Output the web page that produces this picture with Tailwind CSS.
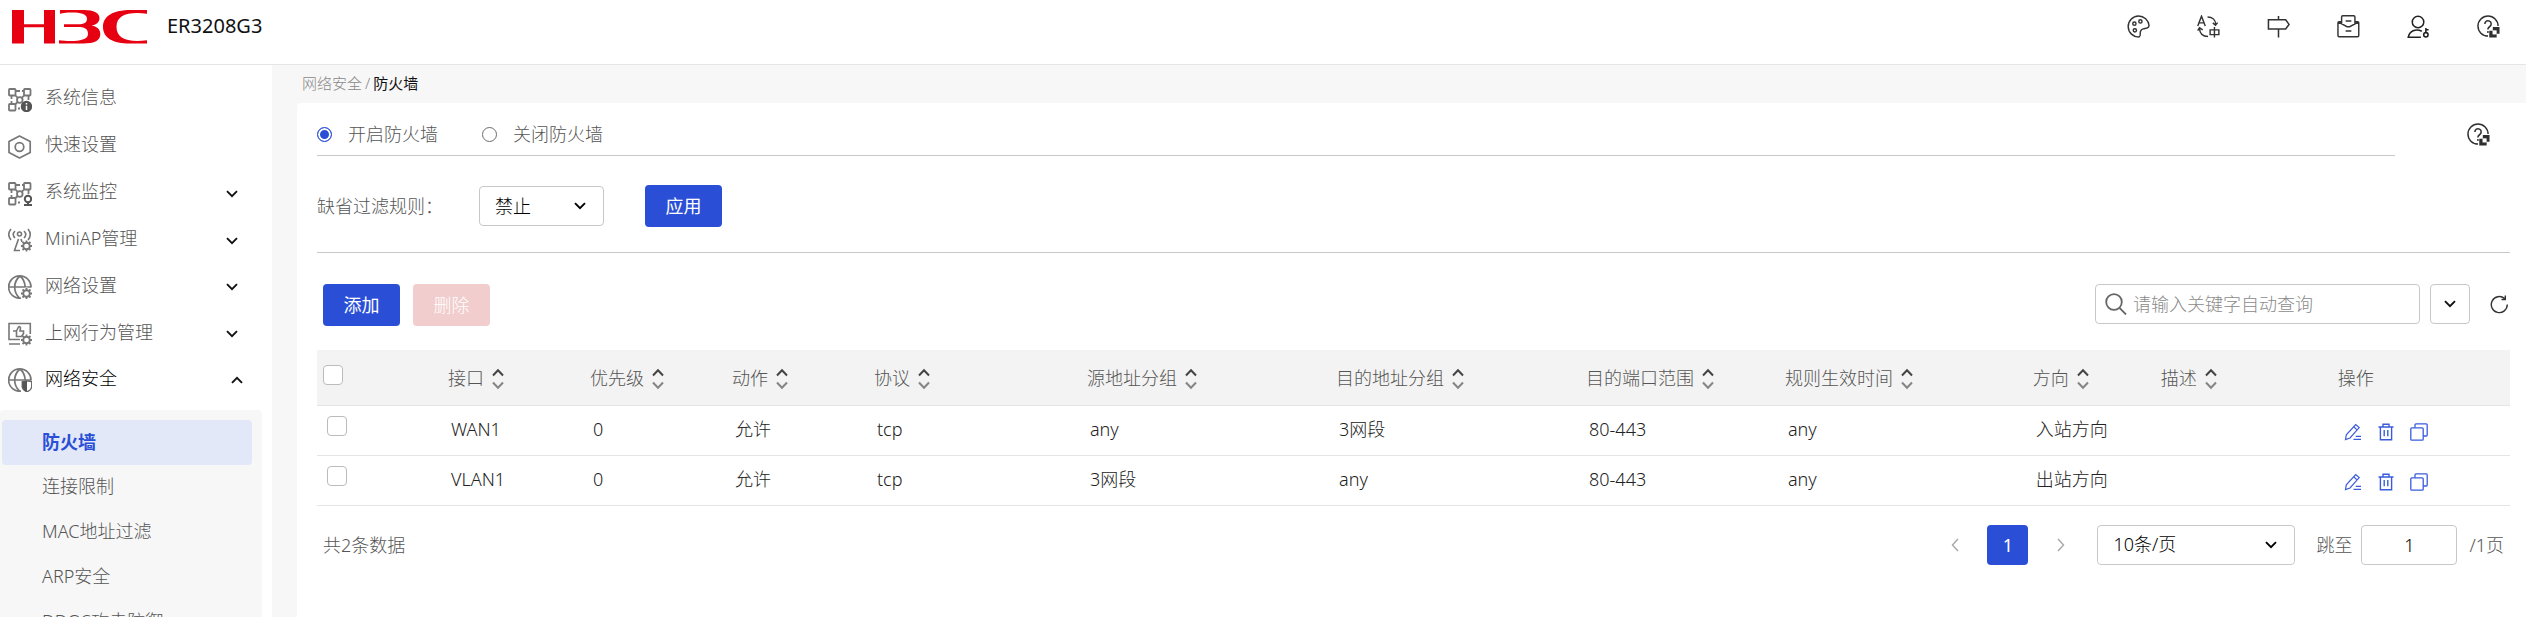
<!DOCTYPE html>
<html lang="zh-CN">
<head>
<meta charset="utf-8">
<title>ER3208G3 - 防火墙</title>
<script src="https://cdn.jsdelivr.net/npm/@tailwindcss/browser@4"></script>
</head>
<body class="flex h-screen flex-col overflow-hidden bg-white font-['Noto_Sans','Noto_Sans_CJK_SC',sans-serif] text-[18px] leading-6 font-light text-[#555]">

<svg class="hidden" aria-hidden="true">
  <defs>
    <symbol id="down" viewBox="0 0 12 8"><path d="M1 1.2 6 6.2 11 1.2" fill="none" stroke="currentColor" stroke-width="1.9"/></symbol>
    <symbol id="up" viewBox="0 0 12 8"><path d="M1 6.8 6 1.8 11 6.8" fill="none" stroke="currentColor" stroke-width="1.9"/></symbol>
    <symbol id="sort" viewBox="0 0 12 22"><path d="M1 7.5 6 2.2 11 7.5" fill="none" stroke="#444" stroke-width="2"/><path d="M1 14.5 6 19.8 11 14.5" fill="none" stroke="#858585" stroke-width="2"/></symbol>
    <symbol id="gear" viewBox="0 0 12 12"><g fill="none" stroke="currentColor"><circle cx="6" cy="6" r="3.3" stroke-width="1.9"/><path d="M6 .4v2M6 9.6v2M.4 6h2M9.6 6h2M2 2l1.5 1.5M8.5 8.5 10 10M10 2 8.500 3.500M3.500 8.500 2 10" stroke-width="1.8"/></g></symbol>
    <symbol id="grid" viewBox="0 0 24 24"><g fill="none" stroke="currentColor" stroke-width="1.800"><rect x="1" y="1" width="6.500" height="6.500" rx=".8"/><rect x="16" y="1" width="6.500" height="6.500" rx=".8"/><rect x="1" y="16" width="6.500" height="6.500" rx=".8"/><circle cx="11.800" cy="12" r="2.800"/><path d="M7.500 3H12M14 3h2M3.500 7.500V11M3.500 13v3M20.500 7.500V12M9.700 9.900 7.500 7.500M13.800 9.900 16 7.500M9.700 14 7.500 16M10 20.500h2"/></g></symbol>
    <symbol id="globe" viewBox="0 0 24 24"><g fill="none" stroke="currentColor" stroke-width="1.700"><path d="M23 12.500A11.200 11.200 0 1 0 13 23.200M1 12H23M12 1C5 7 5 17 11.500 23M12 1c3.500 3 5 6.500 5.200 11"/></g></symbol>
    <symbol id="help" viewBox="0 0 24 24"><g fill="none" stroke="#2f2f2f" stroke-width="1.500"><path d="M22 11.500A10.500 10.500 0 1 0 11.500 22"/><path d="M8.200 9.300a3.300 3.300 0 1 1 5.100 2.700c-1.300.9-2 1.400-2 3.200" stroke-width="1.600"/></g><circle cx="11.400" cy="17.700" r="1" fill="#2f2f2f"/><path d="M16.500 12.500H23.500V19.500H20.500V23.500H12.800V16.500H16.500Z" fill="#2f2f2f"/><rect x="16.200" y="16" width="4.300" height="4.300" fill="#fff"/></symbol>
    <symbol id="edit" viewBox="0 0 18 18"><g fill="none" stroke="#3a5cdc" stroke-width="1.200"><path d="M1.500 16.500 2.300 11.800 11.700 1.500 15.200 4.600 6 15Z"/><path d="M9.700 3.800 13 6.900M11.700 13.300H17M9.500 16.300H17"/></g></symbol>
    <symbol id="trash" viewBox="0 0 18 18"><g fill="none" stroke="#3a5cdc" stroke-width="1.400"><path d="M1.500 4H16.500M6 4V1.300H12V4M3.400 4V16.700H14.600V4M7.200 7V13.300M10.800 7V13.300"/></g></symbol>
    <symbol id="copy" viewBox="0 0 18 18"><g fill="none" stroke="#3a5cdc" stroke-width="1.300"><rect x=".8" y="4.800" width="12.400" height="12.400" rx="1"/><path d="M5 4.800V1.700Q5 .8 6 .8H16.200Q17.200 .8 17.200 1.800V12Q17.200 13 16.200 13H13.200"/></g></symbol>
  </defs>
</svg>

<header class="flex h-[65px] shrink-0 items-start border-b border-[#e5e5e5] pr-[26px] pl-3">
  <svg class="mt-[10px] h-[34px] w-[135px]" viewBox="0 0 135 34" role="img" aria-label="H3C" fill="#e60012">
    <path d="M0 0H12V14.300H32V0H43V33.500H32V17.200H12V33.500H0Z"/>
    <path d="M48 0H72C82 0 87.500 3 87.500 8.200 87.500 12.500 84 14.800 79.500 15.600 85 16.600 88.300 19.400 88.300 24 88.300 30.500 83 33.500 71 33.500H47V30.200C56 31.500 76 32.500 76 24 76 18.500 72 17 66 17H52V14.300H66C72 14.300 75 12.500 75 8.700 75 1 56 2.200 48 3.700Z"/>
    <path d="M135 0H119C101 0 91 6 91 17 91 28 101 33.500 118 33.500H135V30.300C115 33 104.500 28 104.500 17 104.500 5 116 1.500 135 3.700Z"/>
  </svg>
  <h1 class="mt-[14px] ml-5 text-[20px] font-normal text-[#111]">ER3208G3</h1>
  <nav class="mt-[15px] ml-auto flex gap-[47px]" aria-label="工具">
    <button aria-label="主题"><svg class="size-[23px]" viewBox="0 0 24 24" fill="none" stroke="#333" stroke-width="1.500"><path d="M12 1A11 11 0 1 0 12.500 23Q14 22.500 13.800 20 13.500 15.500 17 14.500C20 13.800 23 14 23 11A11 11 0 0 0 12 1Z"/><circle cx="7.700" cy="9" r="1.700"/><circle cx="14" cy="6.700" r="1.700"/><circle cx="8.200" cy="16" r="1.700"/></svg></button>
    <button aria-label="语言"><svg class="size-[23px]" viewBox="0 0 24 24" fill="none" stroke="#333" stroke-width="1.500"><path d="M.8 11.500 4.700 1.200 8.600 11.500M2.200 8.200h5M11 2C16 2 19.500 5 19.500 10M16.500 8.200 19.300 10.700 21.500 8M2.500 14C3 19.500 6.500 22.500 11.500 22.500M.7 16.200 2.600 13.300 6 15.500"/><path d="M13.700 15.500H22.800V20.500H13.700ZM18.200 12.500V23.500"/></svg></button>
    <button aria-label="向导"><svg class="size-[23px]" viewBox="0 0 24 24" fill="none" stroke="#333" stroke-width="1.600"><path d="M1.500 5H19.500L23 9.800 19.500 14.600H1.500ZM12 1V5M12 14.600V23.500"/></svg></button>
    <button aria-label="消息"><svg class="size-[23px]" viewBox="0 0 24 24" fill="none" stroke="#333" stroke-width="1.500"><path d="M4.800 10V2Q4.800 .8 6 .8H17.500Q18.700 .8 18.700 2V10M4.500 7H2Q1 7 1 8V21.500Q1 22.700 2.200 22.700H21.500Q22.700 22.700 22.700 21.500V8Q22.700 7 21.700 7H19M1.500 7.500 10.500 12.200H13.200L22.300 7.500M9 6.200H15M9 16.700H15"/></svg></button>
    <button aria-label="用户"><svg class="size-[23px]" viewBox="0 0 24 24" fill="none" stroke="#222" stroke-width="1.600"><circle cx="11.500" cy="7.300" r="6"/><path d="M15.500 17C9 13.500 2.500 17 1.300 23.200H14.500"/><circle cx="19.700" cy="20.700" r="2.300"/><path d="M19.700 18.400V13.500M19.700 15.300H22.500"/></svg></button>
    <button aria-label="帮助"><svg class="size-[23px]"><use href="#help"/></svg></button>
  </nav>
</header>

<div class="flex min-h-0 flex-1">
  <aside class="w-[272px] shrink-0 pt-2">
    <ul>
      <li><a href="#" class="flex h-[47px] items-center pl-2"><svg class="mt-[7px] size-6 shrink-0 text-[#777]" viewBox="0 0 24 24"><use href="#grid"/><circle cx="18.500" cy="18.500" r="5.700" fill="#555"/><path d="M18.500 15v1.500M18.500 17.800V22" stroke="#fff" stroke-width="1.500"/></svg><span class="ml-[13px]">系统信息</span></a></li>
      <li><a href="#" class="flex h-[47px] items-center pl-2"><svg class="mt-[7px] size-6 shrink-0 text-[#777]" viewBox="0 0 24 24" fill="none" stroke="currentColor" stroke-width="1.700"><path d="M11.500 1 22.200 6.500V17.500L11.500 23 1 17.500V6.500Z" stroke-linejoin="round"/><circle cx="11.500" cy="12" r="4.300"/></svg><span class="ml-[13px]">快速设置</span></a></li>
      <li><a href="#" class="flex h-[47px] items-center pl-2"><svg class="mt-[7px] size-6 shrink-0 text-[#777]" viewBox="0 0 24 24"><use href="#grid"/><circle cx="20" cy="17" r="3.200" fill="#fff" stroke="#555" stroke-width="2"/><path d="M20 20V23M16 23H24" stroke="#555" stroke-width="2"/></svg><span class="ml-[13px]">系统监控</span><svg class="mt-1.5 mr-[34px] ml-auto h-2 w-3 text-[#111]"><use href="#down"/></svg></a></li>
      <li><a href="#" class="flex h-[47px] items-center pl-2"><svg class="mt-1 size-6 shrink-0 text-[#777]" viewBox="0 0 24 24"><g fill="none" stroke="currentColor" stroke-width="1.600"><path d="M3 1Q-1.500 6.500 3 12M7 3Q3.500 6.500 7 10M20 1Q24.500 6.500 20 12M16 3Q19.500 6.500 16 10"/><circle cx="11.500" cy="6" r="2"/><path d="M10.500 11 6.500 22.500H12M13 11 14 14"/></g><use href="#gear" x="12.500" y="12" width="12" height="12"/></svg><span class="ml-[13px]">MiniAP管理</span><svg class="mt-1.5 mr-[34px] ml-auto h-2 w-3 text-[#111]"><use href="#down"/></svg></a></li>
      <li><a href="#" class="flex h-[47px] items-center pl-2"><svg class="mt-1 size-6 shrink-0 text-[#777]" viewBox="0 0 24 24"><use href="#globe"/><circle cx="18.500" cy="18.500" r="6" fill="#fff"/><use href="#gear" x="12.500" y="12.500" width="12" height="12"/></svg><span class="ml-[13px]">网络设置</span><svg class="mt-1 mr-[34px] ml-auto h-2 w-3 text-[#111]"><use href="#down"/></svg></a></li>
      <li><a href="#" class="flex h-[47px] items-center pl-2"><svg class="mt-1 size-6 shrink-0 text-[#777]" viewBox="0 0 24 24"><g fill="none" stroke="currentColor" stroke-width="1.600"><path d="M22.300 12V1.500H1V17.500H12M1 22H12"/><path d="M5 9H8.500V14.500H13.500L15.500 11.500V9H12L12.500 6Q12 4 10.500 5L8.500 9"/></g><use href="#gear" x="12.500" y="12" width="12" height="12"/></svg><span class="ml-[13px]">上网行为管理</span><svg class="mt-1 mr-[34px] ml-auto h-2 w-3 text-[#111]"><use href="#down"/></svg></a></li>
      <li><a href="#" class="flex h-[47px] items-center pb-0.5 pl-2 text-black"><svg class="mt-1 size-6 shrink-0 text-[#777]" viewBox="0 0 24 24"><use href="#globe"/><path d="M13 13H24V19Q23 23 18.500 24.500 14 23 13 19Z" fill="#fff"/><path d="M14.200 13.700 19 12.800 23.700 13.700V19Q23 22.500 19 23.800 15 22.500 14.200 19Z" fill="#fff" stroke="#666" stroke-width="1.300"/><path d="M14.200 13.700 19 12.800V23.800Q15 22.500 14.200 19Z" fill="#555"/></svg><span class="ml-[13px]">网络安全</span><svg class="mt-1 mr-[29px] ml-auto h-2 w-3 text-[#111]"><use href="#up"/></svg></a>
        <ul class="mt-2 mr-[10px] rounded bg-[#f7f7f7] pt-[10px] pr-[10px] pl-0.5">
          <li><a href="#" aria-current="page" class="flex h-[45px] items-center rounded bg-[#e2e8f8] pb-0.5 pl-10 font-bold text-[#2a4fd6]">防火墙</a></li>
          <li><a href="#" class="flex h-[45px] items-center pb-1 pl-10">连接限制</a></li>
          <li><a href="#" class="flex h-[45px] items-center pb-1 pl-10">MAC地址过滤</a></li>
          <li><a href="#" class="flex h-[45px] items-center pb-1 pl-10">ARP安全</a></li>
          <li><a href="#" class="flex h-[45px] items-center pb-1 pl-10">DDOS攻击防御</a></li>
        </ul>
      </li>
    </ul>
  </aside>

  <main class="flex min-w-0 flex-1 flex-col bg-[#f7f7f7] pl-[25px]">
    <nav aria-label="面包屑" class="flex h-[38px] shrink-0 items-center gap-[3px] pb-0.5 pl-[5px] text-[15px] text-[#888]"><a href="#">网络安全</a><span>/</span><span class="font-normal text-[#111]">防火墙</span></nav>

    <div class="flex-1 rounded-tl bg-white pr-4 pl-5">
      <div class="flex pt-[10px]">
        <div class="mr-[72px] flex h-[43px] flex-1 items-center border-b border-[#c8c8c8]">
          <label class="flex w-[165px] items-center gap-4"><input type="radio" name="fw" checked class="size-[15px] appearance-none rounded-full border border-[#2a4fd6] bg-[#2a4fd6] shadow-[inset_0_0_0_2px_white]">开启防火墙</label>
          <label class="flex items-center gap-4"><input type="radio" name="fw" class="size-[15px] appearance-none rounded-full border border-[#6b6b6b]">关闭防火墙</label>
        </div>
        <button aria-label="帮助" class="mr-5 mb-px"><svg class="size-[23px]"><use href="#help"/></svg></button>
      </div>

      <div class="flex items-center border-b border-[#c8c8c8] pt-[29px] pb-[25px]">
        <label for="rule" class="w-[162px]">缺省过滤规则：</label>
        <div class="relative w-[125px] text-black">
          <select id="rule" class="h-10 w-full appearance-none rounded border border-[#c8c8c8] bg-white pl-[15px]"><option>禁止</option><option>允许</option></select>
          <svg class="pointer-events-none absolute top-4 right-[18px] h-2 w-3"><use href="#down"/></svg>
        </div>
        <button class="ml-[41px] h-[42px] w-[77px] rounded bg-[#2a4fd6] font-normal text-white">应用</button>
      </div>

      <div class="flex items-start pt-[31px] pb-6 pl-1.5">
        <button class="h-[42px] w-[77px] rounded bg-[#2a4fd6] font-normal text-white">添加</button>
        <button disabled class="ml-[13px] h-[42px] w-[77px] rounded bg-[#f1cdcd] text-white">删除</button>
        <div class="mr-[10px] ml-auto flex h-10 w-[325px] items-center rounded border border-[#c8c8c8] pl-[9px]">
          <svg class="size-[22px] shrink-0" viewBox="0 0 22 22" fill="none" stroke="#666" stroke-width="1.800"><circle cx="9" cy="9" r="7.800"/><path d="M14.500 14.800 21 21.500"/></svg>
          <input type="search" aria-label="查询" placeholder="请输入关键字自动查询" class="ml-1.5 min-w-0 flex-1 outline-none placeholder:text-[#8a8a8a]">
        </div>
        <button aria-label="高级查询" class="flex h-10 w-10 items-center justify-center rounded border border-[#c8c8c8] text-[#111]"><svg class="h-2 w-3"><use href="#down"/></svg></button>
        <button aria-label="刷新" class="mr-px ml-5 flex h-10 items-center"><svg class="size-[19px]" viewBox="0 0 19 19" fill="none" stroke="#333" stroke-width="1.400"><path d="M17.300 9.500A8 8 0 1 1 14.600 3.600M15.300 .6V4.500H11.500"/></svg></button>
      </div>

      <table class="w-full table-fixed border-collapse text-left">
        <colgroup>
          <col class="w-[5.7%]"><col class="w-[6.475%]"><col class="w-[6.475%]"><col class="w-[6.475%]"><col class="w-[9.71%]"><col class="w-[11.36%]"><col class="w-[11.4%]"><col class="w-[9.07%]"><col class="w-[11.3%]"><col class="w-[5.84%]"><col class="w-[8.07%]"><col>
        </colgroup>
        <thead>
          <tr class="h-[55px] border-b border-[#e5e5e5] bg-[#f3f3f3]">
            <th class="pb-1 pl-1.5"><input type="checkbox" aria-label="全选" class="block size-5 appearance-none rounded border border-[#bbb] bg-white"></th>
            <th class="pt-0.5 pl-1.5 font-light"><span class="flex items-center gap-2">接口<svg class="mt-0.5 h-[22px] w-3"><use href="#sort"/></svg></span></th>
            <th class="pt-0.5 pl-1.5 font-light"><span class="flex items-center gap-2">优先级<svg class="mt-0.5 h-[22px] w-3"><use href="#sort"/></svg></span></th>
            <th class="pt-0.5 pl-1.5 font-light"><span class="flex items-center gap-2">动作<svg class="mt-0.5 h-[22px] w-3"><use href="#sort"/></svg></span></th>
            <th class="pt-0.5 pl-1.5 font-light"><span class="flex items-center gap-2">协议<svg class="mt-0.5 h-[22px] w-3"><use href="#sort"/></svg></span></th>
            <th class="pt-0.5 pl-1.5 font-light"><span class="flex items-center gap-2">源地址分组<svg class="mt-0.5 h-[22px] w-3"><use href="#sort"/></svg></span></th>
            <th class="pt-0.5 pl-1.5 font-light"><span class="flex items-center gap-2">目的地址分组<svg class="mt-0.5 h-[22px] w-3"><use href="#sort"/></svg></span></th>
            <th class="pt-0.5 pl-1.5 font-light"><span class="flex items-center gap-2">目的端口范围<svg class="mt-0.5 h-[22px] w-3"><use href="#sort"/></svg></span></th>
            <th class="pt-0.5 pl-1.5 font-light"><span class="flex items-center gap-2">规则生效时间<svg class="mt-0.5 h-[22px] w-3"><use href="#sort"/></svg></span></th>
            <th class="pt-0.5 pl-1.5 font-light"><span class="flex items-center gap-2">方向<svg class="mt-0.5 h-[22px] w-3"><use href="#sort"/></svg></span></th>
            <th class="pt-0.5 pl-1.5 font-light"><span class="flex items-center gap-2">描述<svg class="mt-0.5 h-[22px] w-3"><use href="#sort"/></svg></span></th>
            <th class="pt-0.5 pl-1.5 font-light">操作</th>
          </tr>
        </thead>
        <tbody class="text-[#222]">
          <tr class="h-[50px] border-b border-[#e5e5e5]">
            <td class="pb-2 pl-[10px]"><input type="checkbox" aria-label="选择 WAN1" class="block size-5 appearance-none rounded border border-[#bbb] bg-white"></td>
            <td class="pb-0.5 pl-[9px]">WAN1</td><td class="pb-0.5 pl-[9px]">0</td><td class="pb-0.5 pl-[9px]">允许</td><td class="pb-0.5 pl-[9px]">tcp</td><td class="pb-0.5 pl-[9px]">any</td><td class="pb-0.5 pl-[9px]">3网段</td><td class="pb-0.5 pl-[9px]">80-443</td><td class="pb-0.5 pl-[9px]">any</td><td class="pb-0.5 pl-[9px]">入站方向</td><td class="pb-0.5 pl-[9px]"></td>
            <td class="pt-1 pl-3"><div class="flex gap-[15px]"><button aria-label="编辑"><svg class="size-[18px]"><use href="#edit"/></svg></button><button aria-label="删除"><svg class="size-[18px]"><use href="#trash"/></svg></button><button aria-label="复制"><svg class="size-[18px]"><use href="#copy"/></svg></button></div></td>
          </tr>
          <tr class="h-[50px] border-b border-[#e5e5e5]">
            <td class="pb-2 pl-[10px]"><input type="checkbox" aria-label="选择 VLAN1" class="block size-5 appearance-none rounded border border-[#bbb] bg-white"></td>
            <td class="pb-0.5 pl-[9px]">VLAN1</td><td class="pb-0.5 pl-[9px]">0</td><td class="pb-0.5 pl-[9px]">允许</td><td class="pb-0.5 pl-[9px]">tcp</td><td class="pb-0.5 pl-[9px]">3网段</td><td class="pb-0.5 pl-[9px]">any</td><td class="pb-0.5 pl-[9px]">80-443</td><td class="pb-0.5 pl-[9px]">any</td><td class="pb-0.5 pl-[9px]">出站方向</td><td class="pb-0.5 pl-[9px]"></td>
            <td class="pt-1 pl-3"><div class="flex gap-[15px]"><button aria-label="编辑"><svg class="size-[18px]"><use href="#edit"/></svg></button><button aria-label="删除"><svg class="size-[18px]"><use href="#trash"/></svg></button><button aria-label="复制"><svg class="size-[18px]"><use href="#copy"/></svg></button></div></td>
          </tr>
        </tbody>
      </table>

      <div class="flex items-center pt-[19px] pr-1.5 pl-1.5">
        <p>共2条数据</p>
        <button aria-label="上一页" class="mr-[28px] ml-auto"><svg class="h-3.5 w-2" viewBox="0 0 8 14" fill="none" stroke="#aaa" stroke-width="1.500"><path d="M7 1 1.500 7 7 13"/></svg></button>
        <button aria-current="page" class="h-10 w-[41px] rounded bg-[#2a4fd6] font-normal text-white">1</button>
        <button aria-label="下一页" class="mr-[32px] ml-[29px]"><svg class="h-3.5 w-2" viewBox="0 0 8 14" fill="none" stroke="#aaa" stroke-width="1.500"><path d="M1 1 6.500 7 1 13"/></svg></button>
        <div class="relative w-[198px] text-black">
          <select aria-label="每页条数" class="h-10 w-full appearance-none rounded border border-[#c8c8c8] bg-white pb-0.5 pl-[15px]"><option>10条/页</option><option>20条/页</option></select>
          <svg class="pointer-events-none absolute top-4 right-[18px] h-2 w-3"><use href="#down"/></svg>
        </div>
        <label for="page" class="ml-[21px]">跳至</label>
        <input id="page" type="text" value="1" class="mr-3 ml-[9px] h-10 w-24 rounded border border-[#c8c8c8] text-center text-black">
        <span>/1页</span>
      </div>
    </div>
  </main>
</div>
</body>
</html>
